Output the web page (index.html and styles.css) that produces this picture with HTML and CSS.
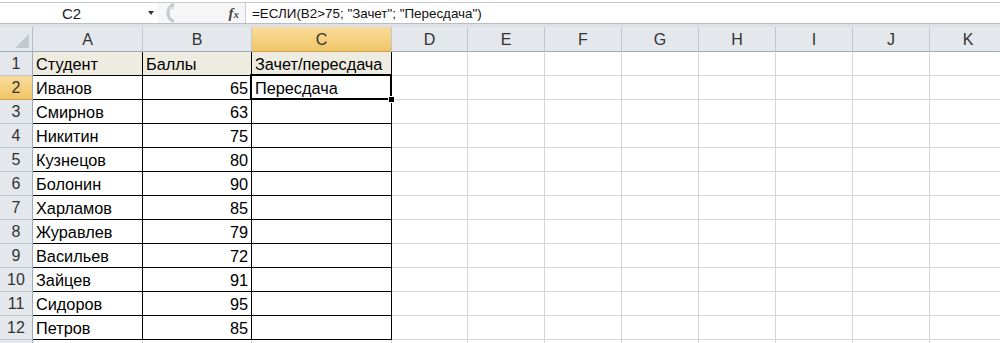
FILE: index.html
```html
<!DOCTYPE html>
<html lang="ru">
<head>
    <meta charset="UTF-8">
    <title>Зачет</title>
    <link rel="stylesheet" href="styles.css">
</head>
<body>
    <!-- Formula bar -->
    <div class="toolbar">
        <div class="namebox">C2</div>
        <div class="drop"><span class="arrow"></span></div>
        <div class="tools">
            <svg class="grip" width="16" height="20" viewBox="0 0 16 20">
                <path d="M14 1.5 A9 9 0 0 0 14 18.5" fill="none" stroke="#c4c7cb" stroke-width="3"/>
                <path d="M9 5 h5" stroke="#d8dadd" stroke-width="2"/>
            </svg>
            <i class="fx">f<small>x</small></i>
        </div>
        <div class="formula">=ЕСЛИ(В2&gt;75; "Зачет"; "Пересдача")</div>
    </div>
    <div class="strip"></div>

    <!-- Sheet -->
    <div class="sheet">
        <div class="corner"><span class="tri"></span></div>
        <div class="colhead">A</div>
        <div class="colhead">B</div>
        <div class="colhead active">C</div>
        <div class="colhead">D</div>
        <div class="colhead">E</div>
        <div class="colhead">F</div>
        <div class="colhead">G</div>
        <div class="colhead">H</div>
        <div class="colhead">I</div>
        <div class="colhead">J</div>
        <div class="colhead">K</div>

        <div class="rowhead">1</div>
        <div class="cell tb head">Студент</div>
        <div class="cell tb head">Баллы</div>
        <div class="cell tb head">Зачет/пересдача</div>
        <div class="cell"></div><div class="cell"></div><div class="cell"></div><div class="cell"></div><div class="cell"></div><div class="cell"></div><div class="cell"></div><div class="cell"></div>

        <div class="rowhead active">2</div>
        <div class="cell tb">Иванов</div>
        <div class="cell tb num">65</div>
        <div class="cell tb selected">Пересдача</div>
        <div class="cell"></div><div class="cell"></div><div class="cell"></div><div class="cell"></div><div class="cell"></div><div class="cell"></div><div class="cell"></div><div class="cell"></div>

        <div class="rowhead">3</div>
        <div class="cell tb">Смирнов</div>
        <div class="cell tb num">63</div>
        <div class="cell tb"></div>
        <div class="cell"></div><div class="cell"></div><div class="cell"></div><div class="cell"></div><div class="cell"></div><div class="cell"></div><div class="cell"></div><div class="cell"></div>

        <div class="rowhead">4</div>
        <div class="cell tb">Никитин</div>
        <div class="cell tb num">75</div>
        <div class="cell tb"></div>
        <div class="cell"></div><div class="cell"></div><div class="cell"></div><div class="cell"></div><div class="cell"></div><div class="cell"></div><div class="cell"></div><div class="cell"></div>

        <div class="rowhead">5</div>
        <div class="cell tb">Кузнецов</div>
        <div class="cell tb num">80</div>
        <div class="cell tb"></div>
        <div class="cell"></div><div class="cell"></div><div class="cell"></div><div class="cell"></div><div class="cell"></div><div class="cell"></div><div class="cell"></div><div class="cell"></div>

        <div class="rowhead">6</div>
        <div class="cell tb">Болонин</div>
        <div class="cell tb num">90</div>
        <div class="cell tb"></div>
        <div class="cell"></div><div class="cell"></div><div class="cell"></div><div class="cell"></div><div class="cell"></div><div class="cell"></div><div class="cell"></div><div class="cell"></div>

        <div class="rowhead">7</div>
        <div class="cell tb">Харламов</div>
        <div class="cell tb num">85</div>
        <div class="cell tb"></div>
        <div class="cell"></div><div class="cell"></div><div class="cell"></div><div class="cell"></div><div class="cell"></div><div class="cell"></div><div class="cell"></div><div class="cell"></div>

        <div class="rowhead">8</div>
        <div class="cell tb">Журавлев</div>
        <div class="cell tb num">79</div>
        <div class="cell tb"></div>
        <div class="cell"></div><div class="cell"></div><div class="cell"></div><div class="cell"></div><div class="cell"></div><div class="cell"></div><div class="cell"></div><div class="cell"></div>

        <div class="rowhead">9</div>
        <div class="cell tb">Васильев</div>
        <div class="cell tb num">72</div>
        <div class="cell tb"></div>
        <div class="cell"></div><div class="cell"></div><div class="cell"></div><div class="cell"></div><div class="cell"></div><div class="cell"></div><div class="cell"></div><div class="cell"></div>

        <div class="rowhead">10</div>
        <div class="cell tb">Зайцев</div>
        <div class="cell tb num">91</div>
        <div class="cell tb"></div>
        <div class="cell"></div><div class="cell"></div><div class="cell"></div><div class="cell"></div><div class="cell"></div><div class="cell"></div><div class="cell"></div><div class="cell"></div>

        <div class="rowhead">11</div>
        <div class="cell tb">Сидоров</div>
        <div class="cell tb num">95</div>
        <div class="cell tb"></div>
        <div class="cell"></div><div class="cell"></div><div class="cell"></div><div class="cell"></div><div class="cell"></div><div class="cell"></div><div class="cell"></div><div class="cell"></div>

        <div class="rowhead">12</div>
        <div class="cell tb">Петров</div>
        <div class="cell tb num">85</div>
        <div class="cell tb"></div>
        <div class="cell"></div><div class="cell"></div><div class="cell"></div><div class="cell"></div><div class="cell"></div><div class="cell"></div><div class="cell"></div><div class="cell"></div>

        <!-- row 13, only its top edge shows -->
        <div class="rowhead"></div>
        <div class="cell"></div><div class="cell"></div><div class="cell"></div>
        <div class="cell"></div><div class="cell"></div><div class="cell"></div><div class="cell"></div><div class="cell"></div><div class="cell"></div><div class="cell"></div><div class="cell"></div>
    </div>
</body>
</html>
```

FILE: styles.css
```css
body {
    margin: 0;
    overflow: hidden;
    background-color: #ffffff;
    font-family: "Liberation Sans", Arial, sans-serif;
    color: #000000;
}
.toolbar {
    display: flex;
    height: 20px;
    margin-top: 2px;
    border-top: 1px solid #c6cacf;
    border-bottom: 1px solid #b8bdc4;
    background-color: #ffffff;
}
.namebox {
    width: 143px;
    text-align: center;
    font-size: 15px;
    line-height: 21px;
    color: #222222;
}
.drop {
    width: 15px;
    display: flex;
    align-items: center;
    justify-content: center;
}
.arrow {
    border-left: 3px solid transparent;
    border-right: 3px solid transparent;
    border-top: 4px solid #333333;
}
.tools {
    width: 87px;
    display: flex;
    align-items: center;
    justify-content: space-between;
    background-color: #f6f6f6;
    border-right: 1px solid #c9ccd0;
}
.grip {
    margin-left: 2px;
}
.fx {
    margin-right: 6px;
    font-family: "Liberation Serif", serif;
    font-weight: bold;
    font-size: 15px;
    color: #444444;
}
.fx small {
    font-size: 11px;
}
.formula {
    padding-left: 6px;
    font-size: 13.4px;
    line-height: 21px;
    color: #111111;
    white-space: nowrap;
}
.strip {
    height: 3px;
    background-color: #dde1e6;
}
.sheet {
    display: grid;
    grid-template-columns: 33px 110px 109px 140px 76px repeat(7, 77px);
    grid-template-rows: 25px;
    grid-auto-rows: 24px;
    width: 1007px;
}
.sheet > div {
    box-sizing: border-box;
}
.corner {
    position: relative;
    background-color: #e4e7eb;
    border-right: 1px solid #b6bcc5;
    border-bottom: 1px solid #9eaab8;
}
.tri {
    position: absolute;
    right: 3px;
    bottom: 3px;
    border-left: 14px solid transparent;
    border-bottom: 14px solid #c3c8cf;
}
.colhead {
    background-color: #e4e7ec;
    border-right: 1px solid #c1c7cf;
    border-bottom: 1px solid #9eaab8;
    text-align: center;
    font-size: 16px;
    line-height: 25px;
    color: #333333;
}
.colhead.active,
.rowhead.active {
    background: linear-gradient(#f9dc9d, #f1c566);
    border-bottom-color: #c9a25a;
}
.rowhead {
    background-color: #e4e7ec;
    border-right: 1px solid #9eaab8;
    border-bottom: 1px solid #c1c7cf;
    text-align: center;
    font-size: 16px;
    line-height: 24px;
    color: #333333;
}
.cell {
    border-right: 1px solid #d4d4d4;
    border-bottom: 1px solid #d4d4d4;
    padding: 0 3px;
    font-size: 16.3px;
    line-height: 24px;
    white-space: nowrap;
}
.cell.tb {
    border-right-color: #000000;
    border-bottom-color: #000000;
}
.cell.head {
    background-color: #eeece1;
}
.cell.num {
    text-align: right;
}
.selected {
    position: relative;
}
.selected::after {
    content: "";
    position: absolute;
    top: -2px;
    left: -2px;
    right: -1px;
    bottom: -1px;
    border: 2px solid #000000;
}
.selected::before {
    content: "";
    position: absolute;
    right: -4px;
    bottom: -4px;
    width: 5px;
    height: 5px;
    background-color: #000000;
    border: 1px solid #ffffff;
    z-index: 1;
}
```
